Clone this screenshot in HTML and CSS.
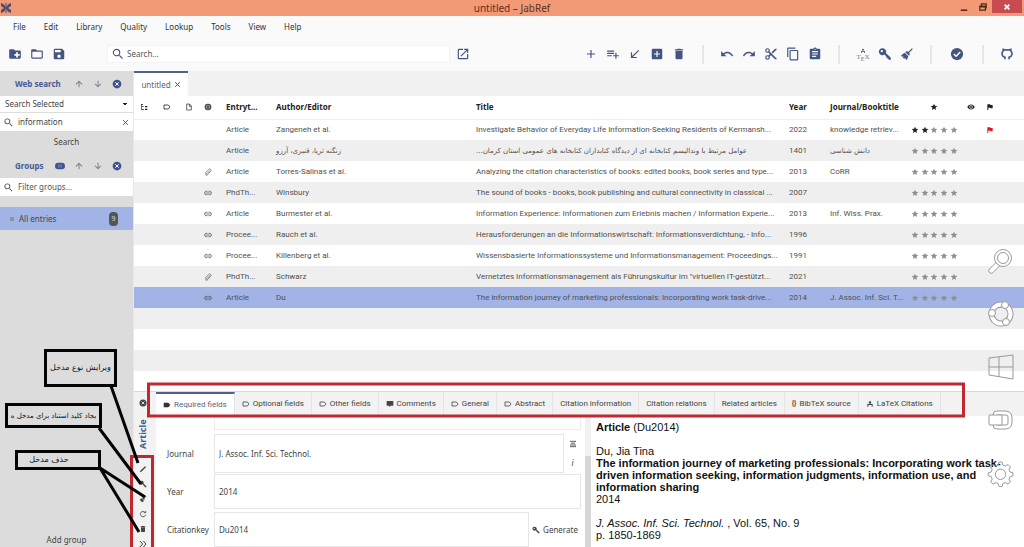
FILE: index.html
```html
<!DOCTYPE html>
<html lang="en">
<head>
<meta charset="utf-8">
<title>untitled – JabRef</title>
<link rel="stylesheet" href="styles.css">
</head>
<body>
<svg class="sprite" aria-hidden="true">
  <symbol id="folder-plus" viewBox="0 0 24 24"><path d="M10 4H4c-1.1 0-2 .9-2 2v12a2 2 0 0 0 2 2h16a2 2 0 0 0 2-2V8a2 2 0 0 0-2-2h-8l-2-2z"/><path d="M14 9h3v3h3v3h-3v3h-3v-3h-3v-3h3z" fill="#fff"/></symbol>
  <symbol id="folder" viewBox="0 0 24 24"><path d="M20 18H4V8h16m0-2h-8l-2-2H4c-1.1 0-2 .9-2 2v12a2 2 0 0 0 2 2h16a2 2 0 0 0 2-2V8a2 2 0 0 0-2-2z"/></symbol>
  <symbol id="save" viewBox="0 0 24 24"><path d="M15 9H5V5h10m-3 14a3 3 0 1 1 0-6 3 3 0 0 1 0 6m5-16H5a2 2 0 0 0-2 2v14a2 2 0 0 0 2 2h14a2 2 0 0 0 2-2V7l-4-4z"/></symbol>
  <symbol id="magnify" viewBox="0 0 24 24"><path d="M9.500 3A6.500 6.500 0 0 1 16 9.500c0 1.610-.59 3.090-1.560 4.230l.27.27h.79l5 5-1.500 1.500-5-5v-.79l-.27-.27A6.500 6.500 0 1 1 9.500 3m0 2a4.500 4.500 0 1 0 0 9 4.500 4.500 0 0 0 0-9z"/></symbol>
  <symbol id="open" viewBox="0 0 24 24"><path d="M14 3v2h3.590l-9.830 9.830 1.410 1.410L19 6.410V10h2V3m-2 16H5V5h7V3H5a2 2 0 0 0-2 2v14a2 2 0 0 0 2 2h14a2 2 0 0 0 2-2v-7h-2v7z"/></symbol>
  <symbol id="plus" viewBox="0 0 24 24"><path d="M19 13h-6v6h-2v-6H5v-2h6V5h2v6h6v2z"/></symbol>
  <symbol id="list-plus" viewBox="0 0 24 24"><path d="M2 16h8v-2H2v2m16-2v-4h-2v4h-4v2h4v4h2v-4h4v-2h-4M14 6H2v2h12V6m0 4H2v2h12v-2z"/></symbol>
  <symbol id="arrow-bl" viewBox="0 0 24 24"><path d="M19 6.400 17.600 5 7 15.600V9H5v10h10v-2H8.400L19 6.400z"/></symbol>
  <symbol id="plus-box" viewBox="0 0 24 24"><path d="M17 13h-4v4h-2v-4H7v-2h4V7h2v4h4m2-8H5a2 2 0 0 0-2 2v14a2 2 0 0 0 2 2h14a2 2 0 0 0 2-2V5a2 2 0 0 0-2-2z"/></symbol>
  <symbol id="trash" viewBox="0 0 24 24"><path d="M19 4h-3.500l-1-1h-5l-1 1H5v2h14M6 19a2 2 0 0 0 2 2h8a2 2 0 0 0 2-2V7H6v12z"/></symbol>
  <symbol id="undo" viewBox="0 0 24 24"><path d="M12.500 8c-2.650 0-5.050 1-6.900 2.600L2 7v9h9l-3.620-3.620c1.390-1.160 3.160-1.880 5.120-1.880 3.540 0 6.550 2.310 7.600 5.500l2.370-.78C21.080 11.030 17.150 8 12.500 8z"/></symbol>
  <symbol id="redo" viewBox="0 0 24 24"><path transform="matrix(-1 0 0 1 24 0)" d="M12.500 8c-2.650 0-5.050 1-6.900 2.600L2 7v9h9l-3.620-3.620c1.390-1.160 3.160-1.880 5.120-1.880 3.540 0 6.550 2.310 7.600 5.500l2.370-.78C21.080 11.030 17.150 8 12.500 8z"/></symbol>
  <symbol id="cut" viewBox="0 0 24 24"><path d="M19 3l-6 6 2 2 7-7V3M6 20a2 2 0 1 1 0-4 2 2 0 0 1 0 4M6 8a2 2 0 1 1 0-4 2 2 0 0 1 0 4m3.640-.36c.23-.5.36-1.050.36-1.640a4 4 0 1 0-4 4c.59 0 1.140-.13 1.640-.36L10 12l-2.360 2.360C7.140 14.130 6.590 14 6 14a4 4 0 1 0 4 4c0-.59-.13-1.140-.36-1.640L12 14l7 7h3v-1L9.640 7.640z"/></symbol>
  <symbol id="copy" viewBox="0 0 24 24"><path d="M19 21H8V7h11m0-2H8a2 2 0 0 0-2 2v14a2 2 0 0 0 2 2h11a2 2 0 0 0 2-2V7a2 2 0 0 0-2-2m-3-4H4a2 2 0 0 0-2 2v14h2V3h12V1z"/></symbol>
  <symbol id="clipboard" viewBox="0 0 24 24"><path d="M17 9H7V7h10v2m0 4H7v-2h10v2m-3 4H7v-2h7v2M12 3a1 1 0 1 1 0 2 1 1 0 0 1 0-2m7 0h-4.180a3 3 0 0 0-5.640 0H5a2 2 0 0 0-2 2v14a2 2 0 0 0 2 2h14a2 2 0 0 0 2-2V5a2 2 0 0 0-2-2z"/></symbol>
  <symbol id="push" viewBox="0 0 24 24"><path d="M12 2l5 6h-3v4h6v8h-3v-5H7v5H4v-8h6V8H7z"/></symbol>
  <symbol id="key" viewBox="0 0 24 24"><path fill-rule="evenodd" d="M8 2a6 6 0 0 1 5.500 8.300L22 18.500V22h-4v-2h-2v-2h-2v-2l-3.200-3A6 6 0 1 1 8 2m-1.500 3a2 2 0 1 0 0 4 2 2 0 0 0 0-4z"/></symbol>
  <symbol id="broom" viewBox="0 0 24 24"><path d="M20.500 2 22 3.500l-6.500 6.700 1.500 1.600-1.500 3-6.500-6 3-1.800 2 1.500zM8 9.800l6.300 6L12 22l-3-1 1-2-3 1-2.500-2 2-2-3.500.5-1-2.500 3-2z"/></symbol>
  <symbol id="check" viewBox="0 0 24 24"><circle cx="12" cy="12" r="10.500"/><path d="M6.500 12l4 4 7-7.500" fill="none" stroke="#fff" stroke-width="2.400"/></symbol>
  <symbol id="github" viewBox="0 0 24 24"><path d="M8.500 21v-3.500C2.500 16 2 9.500 5.500 6.500L5.500 4 9 5.200c2-.5 4-.5 6 0L18.500 4v2.500C22 9.500 21.500 16 15.500 17.500V21" fill="none" stroke="currentColor" stroke-width="2.800"/></symbol>
  <symbol id="up" viewBox="0 0 24 24"><path d="M13 20h-2V8l-5.500 5.500-1.400-1.400L12 4.200l7.900 7.900-1.400 1.400L13 8v12z"/></symbol>
  <symbol id="down" viewBox="0 0 24 24"><path d="M11 4h2v12l5.500-5.500 1.400 1.400-7.900 7.900-7.900-7.900 1.400-1.400L11 16V4z"/></symbol>
  <symbol id="close-circle" viewBox="0 0 24 24"><circle cx="12" cy="12" r="10.500"/><path d="M8 8l8 8M16 8l-8 8" stroke="#fff" stroke-width="2.400"/></symbol>
  <symbol id="union" viewBox="0 0 24 24"><path d="M8 4h8a8 8 0 0 1 0 16H8A8 8 0 0 1 8 4z"/><path d="M9.500 8v8M14.500 8v8" stroke="#aab6d6" stroke-width="1.500"/></symbol>
  <symbol id="x" viewBox="0 0 24 24"><path d="M4 4l16 16M20 4L4 20" stroke="currentColor" stroke-width="3.200"/></symbol>
  <symbol id="tree" viewBox="0 0 24 24"><path d="M3 3h6v2H6v5h5v2H6v7h6v2H4V5H3zM15 9h7v4h-7zM15 17h7v4h-7z"/></symbol>
  <symbol id="label" viewBox="0 0 24 24"><path d="M3 6h13l5 6-5 6H3z" fill="none" stroke="currentColor" stroke-width="2.400"/></symbol>
  <symbol id="label-fill" viewBox="0 0 24 24"><path d="M2 5h14l6 7-6 7H2z"/></symbol>
  <symbol id="file" viewBox="0 0 24 24"><path d="M5 3h9l5 6v12H5zM13 3v7h6" fill="none" stroke="currentColor" stroke-width="2"/></symbol>
  <symbol id="globe" viewBox="0 0 24 24"><circle cx="12" cy="12" r="10"/><path d="M3 9h18M3 15h18M9.500 3q-3 9 0 18M14.500 3q3 9 0 18" fill="none" stroke="#fff" stroke-width="1.300"/></symbol>
  <symbol id="eye" viewBox="0 0 24 24"><path d="M12 9a3 3 0 1 0 0 6 3 3 0 0 0 0-6m0 8a5 5 0 1 1 0-10 5 5 0 0 1 0 10m0-12.500C7 4.500 2.700 7.600 1 12c1.700 4.400 6 7.500 11 7.500s9.300-3.100 11-7.500c-1.700-4.400-6-7.500-11-7.500z"/></symbol>
  <symbol id="flag" viewBox="0 0 24 24"><path d="M13.400 6 13 4H4v17h3v-7h5.600l.4 2h7V6h-6.600z"/></symbol>
  <symbol id="star" viewBox="0 0 24 24"><path d="M12 17.300 18.200 21l-1.700-7L22 9.200l-7.200-.6L12 2 9.200 8.600 2 9.200 7.500 14l-1.700 7z"/></symbol>
  <symbol id="stars" viewBox="0 0 47 8"><use href="#star" x="0" width="8" height="8"/><use href="#star" x="10" width="8" height="8"/><use href="#star" x="19" width="8" height="8"/><use href="#star" x="29" width="8" height="8"/><use href="#star" x="39" width="8" height="8"/></symbol>
  <symbol id="stars-two" viewBox="0 0 47 8"><g fill="#222"><use href="#star" x="0" width="8" height="8"/><use href="#star" x="10" width="8" height="8"/></g><use href="#star" x="19" width="8" height="8"/><use href="#star" x="29" width="8" height="8"/><use href="#star" x="39" width="8" height="8"/></symbol>
  <symbol id="link" viewBox="0 0 24 24"><path d="M10.500 7H7a5 5 0 0 0 0 10h3.500M13.500 7H17a5 5 0 0 1 0 10h-3.500M7 12h10" fill="none" stroke="currentColor" stroke-width="2.400"/></symbol>
  <symbol id="clip" viewBox="0 0 24 24"><path d="M17 8l-8 9a2.200 2.200 0 0 1-4-3l9-9.500a3.500 3.500 0 0 1 6 5L12 19a5 5 0 0 1-8 1" fill="none" stroke="currentColor" stroke-width="2"/></symbol>
  <symbol id="comment" viewBox="0 0 24 24"><path d="M2 3h20v14h-8l-4 5v-5H2z"/></symbol>
  <symbol id="pencil" viewBox="0 0 24 24"><path d="M3 21l1-4L18 4l3 3L7 20z"/></symbol>
  <symbol id="refresh" viewBox="0 0 24 24"><path d="M20 8h-6M20 3v5.500M19 8a8 8 0 1 0 1 6" fill="none" stroke="currentColor" stroke-width="2.400"/></symbol>
  <symbol id="lines" viewBox="0 0 24 24"><path d="M3 4h18M6 9.500h12M3 15h18M3 20h18" stroke="currentColor" stroke-width="2.600"/></symbol>
  <symbol id="chevrons" viewBox="0 0 24 24"><path d="M3 3l8 9-8 9M13 3l8 9-8 9" fill="none" stroke="currentColor" stroke-width="3"/></symbol>
</svg>

<header class="titlebar">
  <svg class="logo" viewBox="0 0 12 12"><path d="M1 1q4 1 4.500 4.500V1h1v4.500Q7 2 11 1v3L8 6l3 2v3Q7 10 6.500 6.500V11h-1V6.500Q5 10 1 11V8l3-2-3-2z" fill="#4b4c78"/></svg>
  <h1 class="window-title">untitled – JabRef</h1>
  <div class="window-buttons">
    <button class="win" aria-label="Minimize"><svg viewBox="0 0 10 10"><path d="M1 9h8" stroke="#5b2a1d" stroke-width="2"/></svg></button>
    <button class="win" aria-label="Restore"><svg viewBox="0 0 10 10"><path d="M3 3V1h6v5H8M1 4h7v5H1z M1 5h7" fill="none" stroke="#4d261b" stroke-width="1.500"/></svg></button>
    <button class="win win-close" aria-label="Close"><svg viewBox="0 0 10 10"><path d="M2 2l6 6M8 2L2 8" stroke="#fff" stroke-width="2"/></svg></button>
  </div>
</header>

<nav class="menu">
  <button>File</button><button>Edit</button><button>Library</button><button>Quality</button><button>Lookup</button><button>Tools</button><button>View</button><button>Help</button>
</nav>

<div class="toolbar">
  <div class="tools">
    <button aria-label="New library"><svg><use href="#folder-plus"/></svg></button>
    <button aria-label="Open library"><svg><use href="#folder"/></svg></button>
    <button aria-label="Save library"><svg><use href="#save"/></svg></button>
  </div>
  <label class="main-search"><svg><use href="#magnify"/></svg><input type="text" placeholder="Search..." aria-label="Search"></label>
  <div class="tools tools-open"><button aria-label="Open global search"><svg><use href="#open"/></svg></button></div>
  <div class="tools">
    <button aria-label="New article"><svg><use href="#plus"/></svg></button>
    <button aria-label="New entry"><svg><use href="#list-plus"/></svg></button>
    <button aria-label="Import"><svg><use href="#arrow-bl"/></svg></button>
    <button aria-label="New from text"><svg><use href="#plus-box"/></svg></button>
    <button aria-label="Delete"><svg><use href="#trash"/></svg></button>
  </div>
  <div class="tools">
    <button aria-label="Undo"><svg><use href="#undo"/></svg></button>
    <button aria-label="Redo"><svg><use href="#redo"/></svg></button>
    <button aria-label="Cut"><svg><use href="#cut"/></svg></button>
    <button aria-label="Copy"><svg><use href="#copy"/></svg></button>
    <button aria-label="Paste"><svg><use href="#clipboard"/></svg></button>
  </div>
  <div class="tools">
    <button class="tex" aria-label="Push to TeX"><svg><use href="#push"/></svg><span>T<sub>E</sub>X</span></button>
    <button aria-label="Generate keys"><svg><use href="#key"/></svg></button>
    <button aria-label="Clean up"><svg><use href="#broom"/></svg></button>
  </div>
  <div class="tools tools-wide"><button aria-label="Check integrity"><svg><use href="#check"/></svg></button></div>
  <div class="tools"><button aria-label="GitHub"><svg><use href="#github"/></svg></button></div>
</div>

<div class="workspace">
  <aside class="sidebar">
    <div class="side-head"><h2>Web search</h2>
      <button aria-label="Move up"><svg><use href="#up"/></svg></button><button aria-label="Move down"><svg><use href="#down"/></svg></button><button class="solid" aria-label="Close"><svg><use href="#close-circle"/></svg></button></div>
    <select class="fetcher" aria-label="Fetcher"><option>Search Selected</option></select>
    <label class="side-field"><svg><use href="#magnify"/></svg><input type="text" value="information" aria-label="Web search query"><svg class="clear"><use href="#x"/></svg></label>
    <button class="side-search">Search</button>
    <div class="side-head"><h2>Groups</h2>
      <button class="solid" aria-label="Union"><svg><use href="#union"/></svg></button><button aria-label="Move up"><svg><use href="#up"/></svg></button><button aria-label="Move down"><svg><use href="#down"/></svg></button><button class="solid" aria-label="Close"><svg><use href="#close-circle"/></svg></button></div>
    <label class="side-field"><svg><use href="#magnify"/></svg><input type="text" placeholder="Filter groups..." aria-label="Filter groups"></label>
    <button class="group-row"><span class="dot"></span>All entries<span class="count">9</span></button>
    <button class="add-group">Add group</button>
  </aside>

  <main class="content">
    <div class="library-tabs"><button class="library-tab">untitled <svg><use href="#x"/></svg></button></div>
    <div class="table-area">
      <table class="entries">
        <colgroup><col class="c-a"><col class="c-b"><col class="c-c"><col class="c-a"><col class="c-type"><col class="c-author"><col><col class="c-year"><col class="c-journal"><col class="c-stars"><col class="c-b"><col class="c-flag"><col class="c-end"></colgroup>
        <thead><tr><th class="i"><svg><use href="#tree"/></svg></th><th class="i"><svg><use href="#label"/></svg></th><th class="i"><svg><use href="#file"/></svg></th><th class="i"><svg><use href="#globe"/></svg></th><th>Entryt...</th><th>Author/Editor</th><th>Title</th><th>Year</th><th>Journal/Booktitle</th><th class="i"><svg><use href="#star"/></svg></th><th class="i"><svg><use href="#eye"/></svg></th><th class="i"><svg><use href="#flag"/></svg></th><th></th></tr></thead>
        <tbody>
          <tr><td></td><td></td><td></td><td></td><td>Article</td><td>Zangeneh et al.</td><td>Investigate Behavior of Everyday Life Information-Seeking Residents of Kermansh...</td><td>2022</td><td>knowledge retriev...</td><td class="i"><svg class="rate"><use href="#stars-two"/></svg></td><td></td><td class="i red"><svg><use href="#flag"/></svg></td><td></td></tr>
          <tr><td></td><td></td><td></td><td></td><td>Article</td><td><bdi lang="fa">زنگنه ثریا، قنبری، آرزو</bdi></td><td><bdi lang="fa" dir="rtl">عوامل مرتبط با وندالیسم کتابخانه ای از دیدگاه کتابداران کتابخانه های عمومی استان کرمان...</bdi></td><td>1401</td><td><bdi lang="fa">دانش شناسی</bdi></td><td class="i"><svg class="rate"><use href="#stars"/></svg></td><td></td><td></td><td></td></tr>
          <tr><td></td><td></td><td></td><td class="i"><svg><use href="#clip"/></svg></td><td>Article</td><td>Torres-Salinas et al.</td><td>Analyzing the citation characteristics of books: edited books, book series and type...</td><td>2013</td><td>CoRR</td><td class="i"><svg class="rate"><use href="#stars"/></svg></td><td></td><td></td><td></td></tr>
          <tr><td></td><td></td><td></td><td class="i"><svg><use href="#link"/></svg></td><td>PhdTh...</td><td>Winsbury</td><td>The sound of books - books, book publishing and cultural connectivity in classical ...</td><td>2007</td><td></td><td class="i"><svg class="rate"><use href="#stars"/></svg></td><td></td><td></td><td></td></tr>
          <tr><td></td><td></td><td></td><td class="i"><svg><use href="#link"/></svg></td><td>Article</td><td>Burmester et al.</td><td>Information Experience: Informationen zum Erlebnis machen / Information Experie...</td><td>2013</td><td>Inf. Wiss. Prax.</td><td class="i"><svg class="rate"><use href="#stars"/></svg></td><td></td><td></td><td></td></tr>
          <tr><td></td><td></td><td></td><td class="i"><svg><use href="#link"/></svg></td><td>Procee...</td><td>Rauch et al.</td><td>Herausforderungen an die Informationswirtschaft: Informationsverdichtung, - Info...</td><td>1996</td><td></td><td class="i"><svg class="rate"><use href="#stars"/></svg></td><td></td><td></td><td></td></tr>
          <tr><td></td><td></td><td></td><td class="i"><svg><use href="#link"/></svg></td><td>Procee...</td><td>Killenberg et al.</td><td>Wissensbasierte Informationssysteme und Informationsmanagement: Proceedings...</td><td>1991</td><td></td><td class="i"><svg class="rate"><use href="#stars"/></svg></td><td></td><td></td><td></td></tr>
          <tr><td></td><td></td><td></td><td class="i"><svg><use href="#clip"/></svg></td><td>PhdTh...</td><td>Schwarz</td><td>Vernetztes Informationsmanagement als Führungskultur im "virtuellen IT-gestützt...</td><td>2021</td><td></td><td class="i"><svg class="rate"><use href="#stars"/></svg></td><td></td><td></td><td></td></tr>
          <tr class="selected"><td></td><td></td><td></td><td class="i"><svg><use href="#link"/></svg></td><td>Article</td><td>Du</td><td>The information journey of marketing professionals: Incorporating work task-drive...</td><td>2014</td><td>J. Assoc. Inf. Sci. T...</td><td class="i"><svg class="rate"><use href="#stars"/></svg></td><td></td><td></td><td></td></tr>
        </tbody>
      </table>
    </div>

    <section class="editor">
      <div class="editor-rail">
        <button aria-label="Close editor"><svg><use href="#close-circle"/></svg></button>
        <h2>Article</h2>
        <button aria-label="Change entry type"><svg><use href="#pencil"/></svg></button>
        <button aria-label="Generate key"><svg><use href="#key"/></svg></button>
        <button aria-label="Clean up entry"><svg><use href="#broom"/></svg></button>
        <button aria-label="Refresh"><svg><use href="#refresh"/></svg></button>
        <button aria-label="Delete entry"><svg><use href="#trash"/></svg></button>
        <button aria-label="More"><svg><use href="#chevrons"/></svg></button>
      </div>
      <div class="editor-main">
        <div class="editor-tabs">
          <button class="active"><svg><use href="#label-fill"/></svg>Required fields</button>
          <button><svg><use href="#label"/></svg>Optional fields</button>
          <button><svg><use href="#label"/></svg>Other fields</button>
          <button><svg><use href="#comment"/></svg>Comments</button>
          <button><svg><use href="#label"/></svg>General</button>
          <button><svg><use href="#label"/></svg>Abstract</button>
          <button>Citation information</button>
          <button>Citation relations</button>
          <button>Related articles</button>
          <button><b class="braces">{}</b>BibTeX source</button>
          <button><svg><use href="#push"/></svg>LaTeX Citations</button>
        </div>
        <div class="editor-body">
          <form class="fields">
            <div class="previous"></div>
            <div class="row row-journal"><label for="journal">Journal</label><input id="journal" type="text" value="J. Assoc. Inf. Sci. Technol."><div class="field-tools"><button type="button" aria-label="Abbreviate"><svg><use href="#lines"/></svg></button><button type="button"><i>i</i></button></div></div>
            <div class="row"><label for="year">Year</label><input id="year" type="text" value="2014"></div>
            <div class="row row-key"><label for="key-field">Citationkey</label><input id="key-field" type="text" value="Du2014"><button type="button" class="generate"><svg><use href="#key"/></svg>Generate</button></div>
          </form>
          <div class="scroll"></div>
          <article class="preview">
            <p><b>Article</b> (Du2014)</p>
            <p>Du, Jia Tina<br><b>The information journey of marketing professionals: Incorporating work task-driven information seeking, information judgments, information use, and information sharing</b><br>2014</p>
            <p><i>J. Assoc. Inf. Sci. Technol.</i> , Vol. 65, No. 9<br>p. 1850-1869</p>
          </article>
        </div>
      </div>
    </section>
  </main>
</div>

<svg class="marks" aria-hidden="true">
  <g fill="none" stroke="#c1272f" stroke-width="3"><path d="M148.500 384h815v32h-815z"/><path d="M131.500 560V456.500h21V560"/></g>
  <g stroke="#050505" stroke-width="3"><path d="M111 386l27 77M99 428l42 56M100 468l45 29M100 468l39 64"/></g>
</svg>
<div class="callout callout-type" lang="fa" dir="rtl">ویرایش نوع مدخل</div>
<div class="callout callout-key" lang="fa" dir="rtl">یجاد کلید استناد برای مدخل ه</div>
<div class="callout callout-delete" lang="fa" dir="rtl">حذف مدخل</div>

<nav class="charms" aria-label="Charms">
  <svg viewBox="0 0 28 28"><g class="line"><path class="solid-white" d="M10 14.500l-7.500 7.500a2.400 2.400 0 0 0 3.500 3.500l7.500-7.500z"/><circle class="solid-white" cx="16" cy="11" r="8.500"/><circle cx="16" cy="11" r="5.500"/></g></svg>
  <svg viewBox="0 0 28 28"><g class="ring"><circle cx="14" cy="14" r="9.500"/></g><g class="ring-in"><circle cx="14" cy="14" r="9.500"/></g><g class="knob"><circle cx="18" cy="5" r="3.500"/><circle cx="5" cy="13" r="3.500"/><circle cx="19" cy="22" r="3.500"/></g></svg>
  <svg viewBox="0 0 28 28"><path class="line" d="M2 5l24-3v24L2 22zM12 4v20M2 14h24"/></svg>
  <svg viewBox="0 0 28 28"><g class="line"><path class="solid-white" d="M6 9q0-4 4-4h8q7 0 7 7v4q0 7-7 7h-8q-4 0-4-4z"/><rect class="solid-white" x="9" y="9" width="12" height="10" rx="2"/><rect class="solid-white" x="2" y="9" width="13" height="10" rx="1"/></g></svg>
  <svg viewBox="0 0 28 28"><g class="line"><path d="M12 3h3l.8 3 2.500 1 2.800-1.500 2.300 2.300L22 10.500l1 2.500 3 .8v3l-3 .8-1 2.500 1.400 2.700-2.300 2.300-2.800-1.500-2.500 1-.8 3h-3l-.8-3-2.500-1-2.700 1.500-2.300-2.300L5.200 20.100l-1-2.500-3-.8v-3l3-.8 1-2.500-1.500-2.700L6 5.500 8.700 7l2.500-1z"/><circle cx="13.500" cy="15.300" r="5.200"/></g></svg>
</nav>
</body>
</html>
```

FILE: styles.css
```css
* { box-sizing: border-box; }
body {
  margin: 0;
  height: 100vh;
  display: flex;
  flex-direction: column;
  position: relative;
  overflow: hidden;
  background: #fafafa;
  color: #444;
  font: 8px/12px "Noto Sans", "DejaVu Sans", sans-serif;
}
button, input, select {
  margin: 0;
  padding: 0;
  border: 0;
  background: none;
  color: inherit;
  font: inherit;
  min-width: 0;
  outline: 0;
}
button { display: flex; align-items: center; justify-content: center; }
h1, h2, p { margin: 0; font: inherit; }
svg { fill: currentColor; flex: none; width: 8px; height: 8px; display: block; }
.sprite { position: absolute; width: 0; height: 0; }
input::placeholder { color: #555; opacity: 1; }

.titlebar { display: flex; align-items: center; height: 16px; flex: none; background: #f29a76; position: relative; }
.logo { width: 12px; height: 12px; position: absolute; left: 0; }
.window-title { flex: 1; text-align: center; font-size: 10px; color: #5d2f20; }
.window-buttons { display: flex; align-self: flex-start; position: absolute; right: 2px; }
.win { width: 19px; height: 13px; }
.win-close { width: 30px; background: #c84b52; }

.menu { display: flex; gap: 18px; height: 22px; flex: none; padding-left: 13px; align-items: center; color: #333; }

.toolbar { display: flex; align-items: center; height: 33px; flex: none; padding: 0 6px 1px 4px; color: #455581; }
.tools { display: flex; align-items: center; }
.tools button { width: 22px; height: 18px; }
.tools svg { width: 14px; height: 14px; }
.tools + .tools::before { content: ""; width: 2px; height: 19px; margin: 0 12px; background: #e6e6e6; }
.tools.tools-open + .tools::before { width: 106px; margin: 0; background: none; }
.tools-wide button { width: 26px; }
.tools .tex { flex-direction: column; color: #777; font: 7px/7px "Liberation Serif", serif; }
.tex sub { font-size: 6px; line-height: 0; }
.tools .tex svg { width: 6px; height: 6px; color: #455581; }
.main-search { display: flex; align-items: center; flex: 1; height: 18px; margin: 0 2px 0 37px; padding-left: 3px; gap: 2px; background: #fff; border: 1px solid #f3f3f3; }
.main-search svg { width: 14px; height: 14px; }
.main-search input { flex: 1; color: #444; }

.workspace { display: flex; flex: 1; min-height: 0; }
.sidebar { width: 134px; flex: none; display: flex; flex-direction: column; background: #dcdcdc; border-right: 1px solid #e8e8e8; color: #444; }
.side-head { display: flex; align-items: center; height: 25px; padding-right: 7px; color: #455a94; }
.side-head h2 { flex: 1; padding-left: 15px; font-weight: 700; }
.side-head button { width: 19px; height: 20px; color: #687089; }
.side-head .solid { color: #3e5390; }
.side-head svg { width: 10px; height: 10px; }
.fetcher {
  appearance: none;
  height: 17px;
  padding: 0 5px;
  border-bottom: 1px solid #ddd;
  background-color: #fff;
  background-image: conic-gradient(from -45deg at 50% 100%, #222 90deg, transparent 0);
  background-size: 6px 3px;
  background-position: right 5px center;
  background-repeat: no-repeat;
}
.side-field { display: flex; align-items: center; gap: 4px; height: 18px; padding: 0 4px 0 3px; background: #fff; }
.side-field svg { width: 11px; height: 11px; color: #555; }
.side-field .clear { width: 7px; height: 7px; }
.side-field input { flex: 1; }
.side-search { height: 22px; }
.group-row { height: 23px; margin-top: 11px; padding: 0 15px 0 10px; gap: 5px; justify-content: flex-start; background: #a2b4e6; }
.dot { width: 4px; height: 4px; background: #8a91a8; }
.count { margin-left: auto; width: 9px; height: 14px; border-radius: 4px; background: #555; color: #ddd; text-align: center; font-size: 7px; line-height: 14px; }
.add-group { margin-top: auto; height: 15px; }

.content { flex: 1; min-width: 0; display: flex; flex-direction: column; background: #fff; }
.library-tabs { display: flex; height: 25px; flex: none; background: #f1f1f1; }
.library-tab { width: 54px; gap: 3px; background: #fff; border-top: 2px solid #50618c; color: #566585; }
.library-tab svg { width: 7px; height: 7px; color: #444; }
.table-area { flex: 1; min-height: 0; overflow: hidden; background: repeating-linear-gradient(#fff 0 21px, #efefef 21px 42px) 0 23px; }
.entries { width: 100%; table-layout: fixed; border-collapse: collapse; line-height: 12px; }
.entries th { height: 23px; background: #fff; border-bottom: 1px solid #eee; color: #222; font-weight: 700; text-align: left; }
.entries td { height: 21px; color: #505050; font-family: Roboto, "DejaVu Sans", sans-serif; }
.entries th, .entries td { padding: 0 0 0 8px; white-space: nowrap; }
.entries .i { padding: 0; }
.entries .i svg { margin: auto; }
.entries .i .rate { width: 47px; height: 8px; color: #8f8f8f; }
.entries .red { color: #d3201f; }
.entries tr:nth-child(even) td { background: #efefef; }
.entries .selected td { background: #a2b4e6; }
.entries bdi { font: 7px/12px "DejaVu Sans", sans-serif; }
.c-a { width: 20px; }
.c-b { width: 26px; }
.c-c { width: 18px; }
.c-type { width: 50px; }
.c-author { width: 200px; }
.c-year { width: 41px; }
.c-journal { width: 88px; }
.c-stars { width: 48px; }
.c-flag { width: 12px; }
.c-end { width: 28px; }

.editor { display: flex; height: 156px; flex: none; border-top: 1px solid #d9d9d9; }
.editor-rail { width: 22px; flex: none; padding-right: 4px; display: flex; flex-direction: column; align-items: center; background: #f2f2f2; color: #444; }
.editor-rail button { width: 18px; height: 15px; flex: none; }
.editor-rail button:first-child { height: 22px; }
.editor-rail h2 { writing-mode: vertical-rl; transform: rotate(180deg); height: 47px; padding-top: 12px; flex: none; color: #455a94; font-size: 9px; font-weight: 700; }
.editor-main { flex: 1; min-width: 0; display: flex; flex-direction: column; }
.editor-tabs { display: flex; height: 24px; flex: none; background: #f2f2f2; font-family: Roboto, sans-serif; }
.editor-tabs button { padding: 0 7px; gap: 3px; border-right: 1px solid #e4e4e4; white-space: nowrap; }
.editor-tabs .active { background: #fff; border-top: 2px solid #50618c; color: #566585; }
.editor-tabs .active svg { color: #333; }
.braces { font-size: 7px; }
.editor-body { flex: 1; min-height: 0; display: flex; }
.fields { flex: 414 0 0; min-width: 0; display: flex; flex-direction: column; gap: 1px; overflow: hidden; padding: 0 4px 0 11px; }
.previous { height: 14px; flex: none; margin-left: 47px; border: 1px solid #ececec; border-top: 0; }
.row { display: flex; height: 35px; flex: none; }
.row-journal { height: 39px; margin-top: 3px; }
.row-key { margin-top: 2px; }
.row label { width: 47px; flex: none; align-self: center; }
.row input { flex: 1; padding-left: 4px; border: 1px solid #e6e6e6; background: #fff; }
.field-tools { width: 17px; display: flex; flex-direction: column; }
.field-tools button { flex: 1; }
.generate { width: 52px; gap: 3px; }
.scroll { width: 6px; flex: none; background: linear-gradient(#f1f1f1 40px, #d6d6d6 40px); }
.preview { flex: 408 0 0; min-width: 0; padding: 5px 20px 0 5px; overflow: hidden; color: #111; font: 11px/12px "Liberation Sans", Arial, sans-serif; }
.preview p { margin-bottom: 12px; }

.marks { position: absolute; inset: 0; width: 100%; height: 100%; pointer-events: none; }
.callout { position: absolute; display: flex; align-items: center; justify-content: center; border: 3px solid #050505; color: #111; font: 8px/12px "DejaVu Sans", sans-serif; white-space: nowrap; overflow: hidden; }
.callout-type { left: 44px; top: 349px; width: 73px; height: 38px; }
.callout-key { left: 5px; top: 403px; width: 97px; height: 25px; font-size: 7px; }
.callout-delete { left: 15px; top: 450px; width: 86px; height: 20px; padding-right: 18px; }
.charms { position: absolute; right: 9px; top: 247px; display: flex; flex-direction: column; gap: 25px; }
.charms svg { width: 28px; height: 28px; fill: none; }
.line, .line * { stroke: #999; stroke-width: 1; }
.solid-white { fill: #fff; }
.ring { stroke: #999; stroke-width: 6; }
.ring-in { stroke: #fff; stroke-width: 4; }
.knob { fill: #fff; stroke: #999; }
```
